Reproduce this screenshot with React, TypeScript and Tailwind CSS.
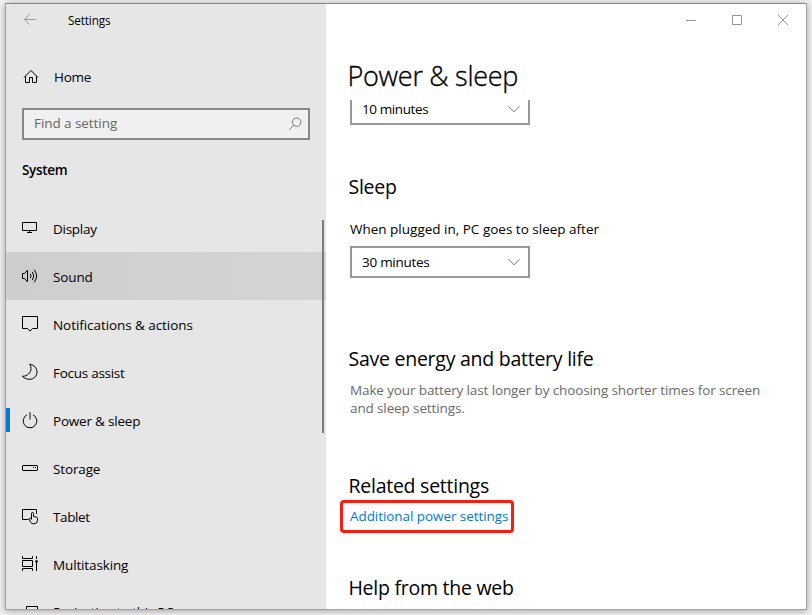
import type { ReactNode } from "react";

type NavItem = {
  label: string;
  icon: ReactNode;
  tracking: string;
  state?: "hover" | "active";
};

// All sidebar icons are drawn on the same 20x20 grid
const navItems: NavItem[] = [
  {
    label: "Display",
    tracking: "tracking-[-0.02em]",
    icon: <path d="M2.5 4.5h14v8h-14zM9.5 13v1.5M7 14.5h5" />,
  },
  {
    label: "Sound",
    tracking: "tracking-[-0.01em]",
    state: "hover",
    icon: (
      <>
        <path d="M2.5 7.5h2L7.5 4v12l-3-3.5h-2z" />
        <path d="M10.3 7.8q1.4 2.1 0 4.4M12.3 5.8q3 4.2 0 8.4M14.3 3.8q4.6 6.2 0 12.4" />
      </>
    ),
  },
  {
    label: "Notifications & actions",
    tracking: "tracking-[-0.005em]",
    icon: <path d="M2.5 2.5h15v12h-5L10 17.2l-2.5-2.7h-5z" />,
  },
  {
    label: "Focus assist",
    tracking: "tracking-[-0.02em]",
    icon: (
      <path d="M9.8 2.2C14 2.8 17 6 17 10s-3.2 7.3-7.3 7.3c-2.9 0-5.7-1.1-7.3-3 4.6 0 8.6-3.3 8.6-7.8 0-1.5-.4-3.1-1.2-4.3z" />
    ),
  },
  {
    label: "Power & sleep",
    tracking: "tracking-[-0.015em]",
    state: "active",
    icon: (
      <>
        <path d="M7 4.9a6.8 6.8 0 1 0 6 0" />
        <path d="M10 2.3v7.2" stroke="#777" strokeWidth="2" />
      </>
    ),
  },
  {
    label: "Storage",
    tracking: "tracking-[-0.01em]",
    icon: (
      <>
        <rect x="2.5" y="7.5" width="15" height="5" rx="0.5" />
        <path d="M13 9.5h1M15 9.5h1" />
      </>
    ),
  },
  {
    label: "Tablet",
    tracking: "tracking-[-0.03em]",
    icon: (
      <>
        <path d="M8.5 13.5h-6v-10h14v4.5" />
        <path d="M11.5 13.5V7.4a1 1 0 0 1 2 0v3.1l3 .6a1.3 1.3 0 0 1 1 1.3v1.8a3.6 3.6 0 0 1-3.6 3.6h-.6a3 3 0 0 1-2.5-1.3l-1.5-2.9a.9.9 0 0 1 .2-1.3c.8-.5 1.4 0 2 1" />
      </>
    ),
  },
  {
    label: "Multitasking",
    tracking: "tracking-[-0.01em]",
    icon: (
      <>
        <path d="M2.5 2v2.5h10V2M2.5 6.5h10v6h-10zM2.5 17v-2.5h10V17M16.5 2v3M16.5 9v8" />
        <circle cx="16.5" cy="7.5" r="1" fill="currentColor" />
      </>
    ),
  },
  {
    label: "Projecting to this PC",
    tracking: "-mt-[2px] tracking-[-0.02em]",
    icon: <path d="M6.5 4.5h11v8h-11z" />,
  },
];

function Icon({ children, size = 20, className = "" }: { children: ReactNode; size?: number; className?: string }) {
  return (
    <svg
      width={size}
      height={size}
      viewBox={`0 0 ${size} ${size}`}
      fill="none"
      stroke="currentColor"
      strokeWidth="1"
      className={`shrink-0 ${className}`}
    >
      {children}
    </svg>
  );
}

function Select({ value, className = "" }: { value: string; className?: string }) {
  return (
    <button
      className={`flex h-8 w-[180px] shrink-0 items-center justify-between border-2 border-[#999] bg-white pr-1 pl-[10px] ${className}`}
    >
      <span>{value}</span>
      <Icon className="text-[#777]">
        <path d="M4.3 7.2l5.7 5.6 5.7-5.6" />
      </Icon>
    </button>
  );
}

function Heading({ children, className = "" }: { children: ReactNode; className?: string }) {
  return (
    <h2 className={`-ml-[1.5px] h-7 shrink-0 text-[19.5px] leading-7 tracking-[-0.013em] ${className}`}>{children}</h2>
  );
}

function Sidebar() {
  return (
    <aside className="relative flex w-80 shrink-0 flex-col overflow-hidden bg-[#e6e6e6]">
      <div className="flex h-8 shrink-0 items-center pl-[14px]">
        <Icon className="text-[#999]">
          <path d="M16 9.5H4.5M9.7 4.3L4.5 9.5l5.2 5.2" />
        </Icon>
        <span className="ml-7 pb-px text-[11.7px] tracking-[-0.01em]">Settings</span>
      </div>

      <div className="mt-[17px] flex h-12 shrink-0 items-center pl-[14px]">
        <Icon>
          <path d="M4 10.5l7-7 7 7M5.5 9.3v6.2h4v-5h3v5h4V9.3" />
        </Icon>
        <span className="ml-[14px] tracking-[-0.02em]">Home</span>
      </div>

      <div className="mt-[7px] ml-4 flex h-8 w-72 shrink-0 items-center justify-between border-2 border-[#888] bg-[#f0f0f0] pr-[3px] pl-[10px]">
        <span className="pb-[3px] tracking-[-0.005em] text-[#666]">Find a setting</span>
        <Icon className="text-[#777]">
          <circle cx="11.7" cy="8.2" r="4.2" />
          <path d="M8.7 11.2L4.5 15.5" />
        </Icon>
      </div>

      <h3 className="mt-[21px] ml-4 h-[18px] shrink-0 font-semibold tracking-[-0.025em]">System</h3>

      <nav className="mt-[25px]">
        {navItems.map((item) => (
          <div
            key={item.label}
            className={`relative flex h-12 items-center pl-[14px] ${
              item.state === "hover" ? "bg-linear-to-r from-[#cecece] to-[#d4d4d4]" : ""
            }`}
          >
            {item.state === "active" && <div className="absolute top-3 left-0 h-6 w-1 bg-[#0078d7]" />}
            <Icon>{item.icon}</Icon>
            <span className={`ml-[13px] pt-px ${item.tracking}`}>{item.label}</span>
          </div>
        ))}
      </nav>

      {/* scrollbar */}
      <div className="absolute top-[216px] right-[2px] h-[213px] w-[2px] bg-[#7a7a7a]" />
    </aside>
  );
}

function WindowControls() {
  return (
    <div className="flex h-8 shrink-0 justify-end text-[#999]">
      <button className="flex w-[46px] items-center justify-center">
        <Icon size={10}>
          <path d="M0 5.5h10" />
        </Icon>
      </button>
      <button className="flex w-[46px] items-center justify-center">
        <Icon size={10}>
          <path d="M.5.5h9v9h-9z" />
        </Icon>
      </button>
      <button className="flex w-[46px] items-center justify-center">
        <Icon size={10}>
          <path d="M0 0l10 10M10 0L0 10" />
        </Icon>
      </button>
    </div>
  );
}

export default function App() {
  return (
    <div className="h-[615px] w-[812px] overflow-hidden bg-[#f2f2f2] pt-[3px] pl-[5px] font-['Open_Sans','Noto_Sans',sans-serif] text-[13.5px] leading-[18px] text-black">
      <div className="flex h-[607px] w-[802px] border border-[#a0a0a0] border-t-[#888] shadow-[0_1px_7px_rgba(0,0,0,0.35)]">
        <Sidebar />

        <main className="flex min-w-0 flex-1 flex-col bg-white">
          <WindowControls />
          <h1 className="mt-5 ml-[21.5px] h-11 shrink-0 text-[27px] leading-10 font-light tracking-[-0.01em] [-webkit-text-stroke:0.35px_black]">
            Power &amp; sleep
          </h1>

          <div className="flex min-h-0 flex-1 flex-col items-start overflow-hidden pl-6">
            <Select value="10 minutes" className="-mt-[7px] tracking-[-0.03em]" />

            <Heading className="mt-12">Sleep</Heading>
            <p className="mt-[19px] shrink-0">When plugged in, PC goes to sleep after</p>
            <Select value="30 minutes" className="mt-2 tracking-[-0.02em]" />

            <Heading className="mt-[67px]">Save energy and battery life</Heading>
            <p className="mt-2 w-[425px] shrink-0 tracking-[-0.009em] text-[#6b6b6b]">
              Make your battery last longer by choosing shorter times for screen and sleep settings.
            </p>

            <Heading className="mt-[55px]">Related settings</Heading>
            <div className="-ml-[10px] flex h-[33px] w-[174px] shrink-0 items-center rounded-[4px] border-3 border-[#fb1c10] pb-px pl-[7px]">
              <a className="whitespace-nowrap tracking-[-0.005em] text-[#0078d7]">Additional power settings</a>
            </div>

            <Heading className="mt-[41px]">Help from the web</Heading>
          </div>
        </main>
      </div>
    </div>
  );
}
